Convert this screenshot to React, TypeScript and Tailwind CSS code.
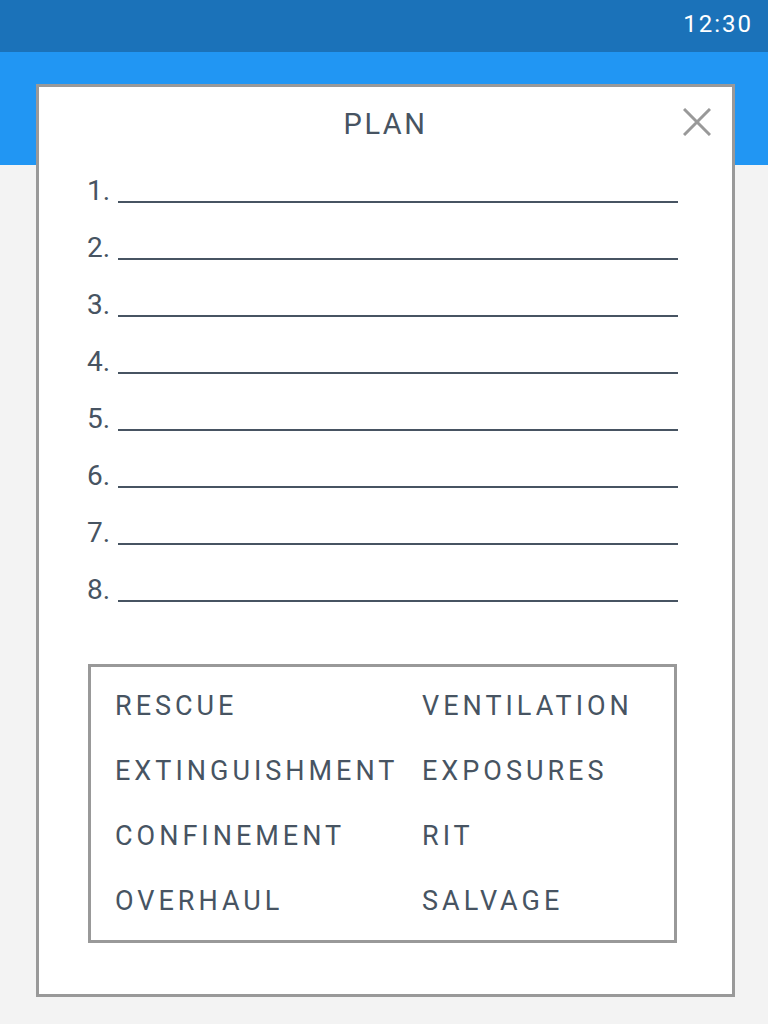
import React from "react";

const tasks = [
  ["RESCUE", "VENTILATION"],
  ["EXTINGUISHMENT", "EXPOSURES"],
  ["CONFINEMENT", "RIT"],
  ["OVERHAUL", "SALVAGE"],
];

const App = () => {
  return (
    <div className="relative h-[1024px] w-[768px] overflow-hidden bg-[#f3f3f3] font-['Roboto',sans-serif]">
      {/* status bar */}
      <div className="flex h-[52px] justify-end bg-[#1b72b9] pr-[15px] pt-[12px]">
        <span className="text-[24px] leading-[24px] tracking-[2px] text-white">12:30</span>
      </div>
      {/* app bar */}
      <div className="h-[113px] bg-[#2196f3]" />

      {/* plan dialog */}
      <div className="absolute left-[36px] top-[84px] h-[913px] w-[699px] border-[3px] border-[#999999] bg-white text-[#475462]">
        <div className="h-[61px] pt-[23px] text-center text-[29px] leading-[28px] tracking-[2.5px]">PLAN</div>
        <button className="absolute right-[21px] top-[21px] h-[28px] w-[28px]">
          <svg viewBox="0 0 28 28" width="28" height="28">
            <path d="M1 1L27 27M27 1L1 27" stroke="#999999" strokeWidth="3" />
          </svg>
        </button>

        <div className="ml-[48px] w-[591px]">
          {[1, 2, 3, 4, 5, 6, 7, 8].map((n) => (
            <div key={n} className="flex h-[57px] items-end">
              <span className="w-[31px] text-[28px] leading-[28px]">{n}.</span>
              <div className="mb-[2px] h-[2px] flex-1 bg-[#475462]" />
            </div>
          ))}

          <div className="ml-[1px] mt-[60px] h-[279px] w-[589px] border-[3px] border-[#999999] pl-[24px] pt-[7px]">
            {tasks.map(([a, b]) => (
              <div key={a} className="grid h-[65px] grid-cols-[307px_1fr] text-[27px] leading-[65px] tracking-[4px]">
                <span>{a}</span>
                <span>{b}</span>
              </div>
            ))}
          </div>
        </div>
      </div>
    </div>
  );
};

export default App;
